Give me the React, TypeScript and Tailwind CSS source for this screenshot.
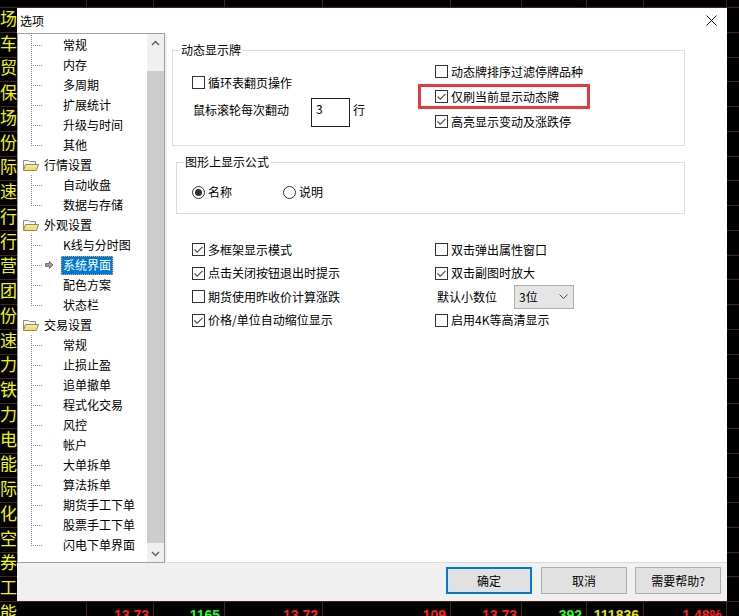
import React from "react";

type TreeItem = { label: string; level: 0 | 1; line?: "full" | "half"; selected?: boolean };

const tree: TreeItem[] = [
  { label: "常规", level: 1, line: "full" },
  { label: "内存", level: 1, line: "full" },
  { label: "多周期", level: 1, line: "full" },
  { label: "扩展统计", level: 1, line: "full" },
  { label: "升级与时间", level: 1, line: "full" },
  { label: "其他", level: 1, line: "half" },
  { label: "行情设置", level: 0 },
  { label: "自动收盘", level: 1, line: "full" },
  { label: "数据与存储", level: 1, line: "half" },
  { label: "外观设置", level: 0 },
  { label: "K线与分时图", level: 1, line: "full" },
  { label: "系统界面", level: 1, line: "full", selected: true },
  { label: "配色方案", level: 1, line: "full" },
  { label: "状态栏", level: 1, line: "half" },
  { label: "交易设置", level: 0 },
  { label: "常规", level: 1, line: "full" },
  { label: "止损止盈", level: 1, line: "full" },
  { label: "追单撤单", level: 1, line: "full" },
  { label: "程式化交易", level: 1, line: "full" },
  { label: "风控", level: 1, line: "full" },
  { label: "帐户", level: 1, line: "full" },
  { label: "大单拆单", level: 1, line: "full" },
  { label: "算法拆单", level: 1, line: "full" },
  { label: "期货手工下单", level: 1, line: "full" },
  { label: "股票手工下单", level: 1, line: "full" },
  { label: "闪电下单界面", level: 1, line: "half" },
];

const names = [
  "市场", "汽车", "外贸", "环保", "市场", "股份", "国际", "高速", "银行", "银行",
  "经营", "集团", "股份", "高速", "电力", "钢铁", "电力", "供电", "储能", "国际",
  "石化", "航空", "证券", "化工", "储能",
];

const colWidths = [87, 67, 71, 98, 128, 71, 65, 57, 83, 12];

const lastRow: { t: string; c: string }[] = [
  { t: "", c: "" },
  { t: "13.73", c: "text-[#ff2020]" },
  { t: "1165", c: "text-[#20ff20]" },
  { t: "13.72", c: "text-[#ff2020]" },
  { t: "109", c: "text-[#ff2020]" },
  { t: "13.73", c: "text-[#ff2020]" },
  { t: "392", c: "text-[#20ff20]" },
  { t: "111836", c: "text-[#e0e000]" },
  { t: "1.48%", c: "text-[#ff2020]" },
  { t: "", c: "" },
];

function GridRow({ name, last, top }: { name?: string; last?: boolean; top?: boolean }) {
  return (
    <div
      className={`flex shrink-0 ${top ? "h-[7px]" : "h-[24.75px] border-t border-[#4a2216]"}`}
    >
      {colWidths.map((w, i) => (
        <div
          key={i}
          style={{ width: w }}
          className={`h-full shrink-0 ${i < colWidths.length - 1 ? "border-r border-[#4a2216]" : ""} flex items-start`}
        >
          {i === 0 && name ? (
            <div className="w-[17px] h-full overflow-hidden flex justify-end items-center pb-[4px]">
              <span className="whitespace-nowrap text-[17px] leading-[20px] text-[#f4f400] font-['Noto_Sans_CJK_SC',sans-serif]">
                {name}
              </span>
            </div>
          ) : null}
          {last && i > 0 && lastRow[i].t ? (
            <div
              className={`w-full text-right pr-[4px] pt-[5px] font-['Liberation_Sans',Arial,sans-serif] font-bold text-[14px] leading-[16px] ${lastRow[i].c}`}
            >
              {lastRow[i].t}
            </div>
          ) : null}
        </div>
      ))}
    </div>
  );
}

function Background() {
  return (
    <div className="flex flex-col">
      <GridRow top />
      {names.map((n, i) => (
        <GridRow key={i} name={n} last={i === names.length - 1} />
      ))}
    </div>
  );
}

function CheckBox({ checked }: { checked?: boolean }) {
  return (
    <span className="w-[13px] h-[13px] shrink-0 border border-[#333333] bg-white flex items-center justify-center">
      {checked ? (
        <svg width="11" height="11" viewBox="0 0 11 11">
          <path d="M1.5 5.5 L4.2 8.2 L9.5 2.8" fill="none" stroke="#4a4a4a" strokeWidth="1.1" />
        </svg>
      ) : null}
    </span>
  );
}

function Radio({ checked }: { checked?: boolean }) {
  return (
    <span className="w-[13px] h-[13px] shrink-0 rounded-full border border-[#333333] bg-white flex items-center justify-center">
      {checked ? <span className="w-[7px] h-[7px] rounded-full bg-[#333333]" /> : null}
    </span>
  );
}

function Check({ label, checked }: { label: string; checked?: boolean }) {
  return (
    <div className="flex items-center gap-[3px] h-full">
      <CheckBox checked={checked} />
      <span className="whitespace-nowrap">{label}</span>
    </div>
  );
}

function Folder() {
  return (
    <svg width="16" height="13" viewBox="0 0 16 13" className="shrink-0">
      <path d="M0.5 11.5 V1.5 H5.5 L6.5 2.5 H12.5 V5.5" fill="#f4f4f4" stroke="#8a8a8a" />
      <path d="M0.5 11.5 L2.5 5.5 H15.5 L13.5 11.5 Z" fill="#f6dc6c" stroke="#8a8a70" />
      <path d="M3 7 H14" stroke="#fff3b0" />
    </svg>
  );
}

function TreeLines({ line, selected }: { line?: "full" | "half"; selected?: boolean }) {
  return (
    <svg width="43" height="20" viewBox="0 0 43 20" className="shrink-0">
      <line
        x1="13.5"
        y1="0"
        x2="13.5"
        y2={line === "half" ? 11 : 20}
        stroke="#8c8c8c"
        strokeDasharray="1 1"
        shapeRendering="crispEdges"
      />
      <line x1="15" y1="10.5" x2="25" y2="10.5" stroke="#8c8c8c" strokeDasharray="1 1" shapeRendering="crispEdges" />
      {selected ? (
        <path d="M27.5 8.5 H31.5 V6.5 L35 10 L31.5 13.5 V11.5 H27.5 Z" fill="#9a9a9a" stroke="#5a5a5a" strokeWidth="0.8" />
      ) : null}
    </svg>
  );
}

function Tree() {
  return (
    <div className="w-[148px] h-full border border-[#a0a0a0] bg-white flex">
      <div className="flex-1 flex flex-col pt-[1px] overflow-hidden">
        {tree.map((it, i) =>
          it.level === 0 ? (
            <div key={i} className="h-[20px] shrink-0 flex items-center">
              <span className="ml-[5px]">
                <Folder />
              </span>
              <span className="ml-[5px] whitespace-nowrap">{it.label}</span>
            </div>
          ) : (
            <div key={i} className="h-[20px] shrink-0 flex items-center">
              <TreeLines line={it.line} selected={it.selected} />
              <span
                className={`px-[2px] h-[19px] flex items-center whitespace-nowrap ${
                  it.selected
                    ? "bg-[#0078d7] text-white outline-dotted outline-1 -outline-offset-1 outline-[#f59e3b]"
                    : ""
                }`}
              >
                {it.label}
              </span>
            </div>
          )
        )}
      </div>
      <div className="w-[17px] flex flex-col bg-[#f0f0f0]">
        <div className="h-[17px] flex items-center justify-center">
          <svg width="9" height="6" viewBox="0 0 9 6">
            <path d="M1 5 L4.5 1.5 L8 5" fill="none" stroke="#606060" strokeWidth="1.5" />
          </svg>
        </div>
        <div className="h-[20px]" />
        <div className="h-[472px] bg-[#cdcdcd]" />
        <div className="flex-1" />
        <div className="h-[17px] flex items-center justify-center">
          <svg width="9" height="6" viewBox="0 0 9 6">
            <path d="M1 1 L4.5 4.5 L8 1" fill="none" stroke="#606060" strokeWidth="1.5" />
          </svg>
        </div>
      </div>
    </div>
  );
}

function RightPanel() {
  return (
    <div className="w-[560px] ml-[2px] h-full bg-white border-b border-[#dadada] flex flex-col">
      {/* Group 1 */}
      <div className="mt-[17px] ml-[5px] w-[513px] h-[96px] shrink-0 border border-[#dcdcdc]">
        <div className="-mt-[9px] ml-[7px] w-fit px-[1px] bg-white h-[16px]">动态显示牌</div>
        <div className="flex">
          <div className="ml-[19px] w-[243px] mt-[12px] flex flex-col">
            <div className="h-[25px]">
              <Check label="循环表翻页操作" />
            </div>
            <div className="flex items-start mt-[3px]">
              <span className="w-[119px] pl-[1px] mt-[4px] whitespace-nowrap">鼠标滚轮每次翻动</span>
              <div className="w-[39px] h-[29px] border border-[#222222] pl-[4px] pt-[2px]">3</div>
              <span className="ml-[3px] mt-[4px]">行</span>
            </div>
          </div>
          <div className="mt-[1px] flex flex-col">
            <div className="h-[25px]">
              <Check label="动态牌排序过滤停牌品种" />
            </div>
            <div className="h-[25px]">
              <Check label="仅刷当前显示动态牌" checked />
            </div>
            <div className="h-[25px]">
              <Check label="高亮显示变动及涨跌停" checked />
            </div>
          </div>
        </div>
      </div>

      {/* Group 2 */}
      <div className="mt-[16px] ml-[9px] w-[509px] h-[52px] shrink-0 border border-[#dcdcdc]">
        <div className="-mt-[9px] ml-[7px] w-fit px-[1px] bg-white h-[16px]">图形上显示公式</div>
        <div className="flex items-center h-[24px] mt-[10px] ml-[15px]">
          <div className="w-[91px] flex items-center gap-[3px]">
            <Radio checked />
            <span>名称</span>
          </div>
          <div className="flex items-center gap-[3px]">
            <Radio />
            <span>说明</span>
          </div>
        </div>
      </div>

      {/* Other options */}
      <div className="mt-[24px] ml-[25px] flex">
        <div className="w-[243px] flex flex-col">
          <div className="h-[23.5px]">
            <Check label="多框架显示模式" checked />
          </div>
          <div className="h-[23.5px]">
            <Check label="点击关闭按钮退出时提示" checked />
          </div>
          <div className="h-[23.5px]">
            <Check label="期货使用昨收价计算涨跌" />
          </div>
          <div className="h-[23.5px]">
            <Check label="价格/单位自动缩位显示" checked />
          </div>
        </div>
        <div className="flex flex-col">
          <div className="h-[23.5px]">
            <Check label="双击弹出属性窗口" />
          </div>
          <div className="h-[23.5px]">
            <Check label="双击副图时放大" checked />
          </div>
          <div className="h-[23.5px] flex items-center">
            <span className="w-[79px] pl-[2px] whitespace-nowrap">默认小数位</span>
            <div className="w-[60px] h-[24px] bg-[#e5e5e5] border border-[#adadad] flex items-center justify-between pl-[4px] pr-[5px]">
              <span>3位</span>
              <svg width="9" height="5" viewBox="0 0 9 5">
                <path d="M0.5 0.5 L4.5 4.5 L8.5 0.5" fill="none" stroke="#505050" strokeWidth="1" />
              </svg>
            </div>
          </div>
          <div className="h-[23.5px]">
            <Check label="启用4K等高清显示" />
          </div>
        </div>
      </div>
    </div>
  );
}

function Btn({ label, primary, className }: { label: string; primary?: boolean; className?: string }) {
  return (
    <div
      className={`w-[86px] h-[27px] bg-[#e1e1e1] flex items-center justify-center ${
        primary ? "border-2 border-[#0078d7]" : "border border-[#adadad]"
      } ${className ?? ""}`}
    >
      {label}
    </div>
  );
}

function Dialog() {
  return (
    <div className="absolute left-[17px] top-[8px] w-[710px] h-[593px] bg-[#f0f0f0] flex flex-col">
      <div className="h-[25px] shrink-0 bg-white flex items-center justify-between pl-[3px] pr-[10px]">
        <span>选项</span>
        <svg width="11" height="11" viewBox="0 0 11 11">
          <path d="M0.5 0.5 L10.5 10.5 M10.5 0.5 L0.5 10.5" stroke="#111111" strokeWidth="1" />
        </svg>
      </div>
      <div className="flex h-[530px] shrink-0">
        <Tree />
        <RightPanel />
      </div>
      <div className="h-[38px] shrink-0 flex items-start justify-end pt-[4px] pr-[6px]">
        <Btn label="确定" primary />
        <Btn label="取消" className="ml-[9px]" />
        <Btn label="需要帮助?" className="ml-[8px]" />
      </div>
    </div>
  );
}

export default function App() {
  return (
    <div className="relative w-[739px] h-[616px] overflow-hidden bg-black font-['Noto_Sans_CJK_SC',sans-serif] text-[12px] leading-[16px] text-black">
      <Background />
      <Dialog />
      <div className="absolute left-[418px] top-[84px] w-[172px] h-[25px] border-[3px] border-[#e8393c]" />
    </div>
  );
}
